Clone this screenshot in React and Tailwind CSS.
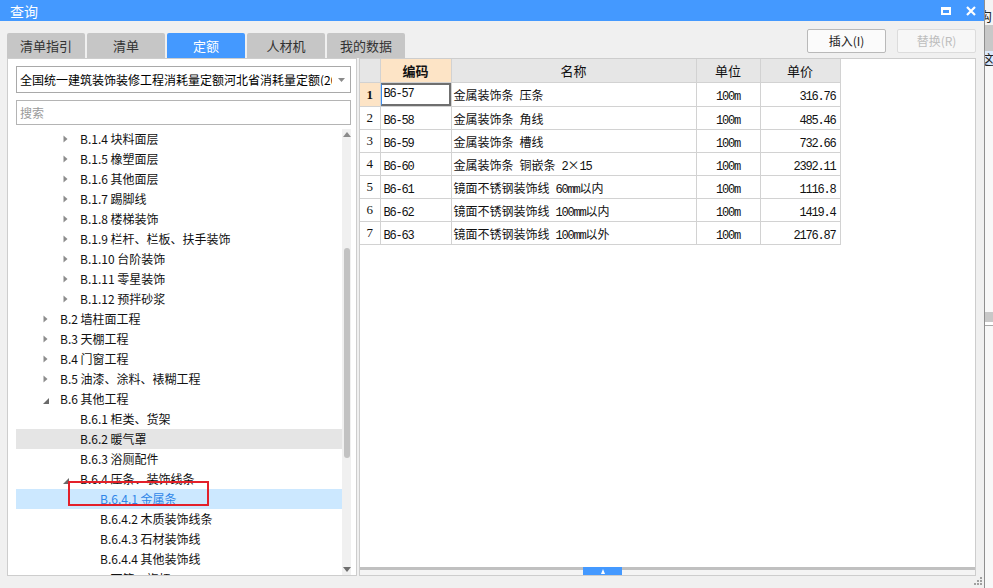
import React from "react";

const UI = "font-['Noto_Sans_CJK_SC',sans-serif]";

const tree = [
  { l: 2, t: "B.1.4 块料面层", a: "c" },
  { l: 2, t: "B.1.5 橡塑面层", a: "c" },
  { l: 2, t: "B.1.6 其他面层", a: "c" },
  { l: 2, t: "B.1.7 踢脚线", a: "c" },
  { l: 2, t: "B.1.8 楼梯装饰", a: "c" },
  { l: 2, t: "B.1.9 栏杆、栏板、扶手装饰", a: "c" },
  { l: 2, t: "B.1.10 台阶装饰", a: "c" },
  { l: 2, t: "B.1.11 零星装饰", a: "c" },
  { l: 2, t: "B.1.12 预拌砂浆", a: "c" },
  { l: 1, t: "B.2 墙柱面工程", a: "c" },
  { l: 1, t: "B.3 天棚工程", a: "c" },
  { l: 1, t: "B.4 门窗工程", a: "c" },
  { l: 1, t: "B.5 油漆、涂料、裱糊工程", a: "c" },
  { l: 1, t: "B.6 其他工程", a: "e" },
  { l: 2, t: "B.6.1 柜类、货架" },
  { l: 2, t: "B.6.2 暖气罩", hover: true },
  { l: 2, t: "B.6.3 浴厕配件" },
  { l: 2, t: "B.6.4 压条、装饰线条", a: "e" },
  { l: 3, t: "B.6.4.1 金属条", sel: true },
  { l: 3, t: "B.6.4.2 木质装饰线条" },
  { l: 3, t: "B.6.4.3 石材装饰线" },
  { l: 3, t: "B.6.4.4 其他装饰线" },
  { l: 2, t: "B.6.5 雨篷、旗杆", a: "c" },
];

const pad = { 1: "pl-[27px]", 2: "pl-[47px]", 3: "pl-[67px]" };

const rows = [
  ["B6-57", "金属装饰条 压条", "316.76"],
  ["B6-58", "金属装饰条 角线", "485.46"],
  ["B6-59", "金属装饰条 槽线", "732.66"],
  ["B6-60", "金属装饰条 铜嵌条 2×15", "2392.11"],
  ["B6-61", "镜面不锈钢装饰线 60mm以内", "1116.8"],
  ["B6-62", "镜面不锈钢装饰线 100mm以内", "1419.4"],
  ["B6-63", "镜面不锈钢装饰线 100mm以外", "2176.87"],
];

function Mixed({ text }) {
  const parts = text.match(/[\x20-\x7e]+|[^\x20-\x7e]+/g) || [];
  return (
    <>
      {parts.map((p, i) =>
        /^[\x20-\x7e]+$/.test(p) ? (
          <span key={i} className="font-['Liberation_Mono',monospace] text-[12px] tracking-[-1.2px]">
            {p}
          </span>
        ) : (
          <span key={i} className={`${UI} text-[12px]`}>
            {p}
          </span>
        )
      )}
    </>
  );
}

function Arrow({ a }) {
  if (a === "c")
    return (
      <svg width="5" height="8" viewBox="0 0 5 8">
        <path d="M0.5 0.5L4.5 4L0.5 7.5Z" fill="#8c8c8c" />
      </svg>
    );
  if (a === "e")
    return (
      <svg width="6" height="6" viewBox="0 0 6 6" className="mt-[3px]">
        <path d="M6 0L6 6L0 6Z" fill="#6a6a6a" />
      </svg>
    );
  return null;
}

export default function App() {
  const tabs = ["清单指引", "清单", "定额", "人材机", "我的数据"];
  return (
    <div className={`w-[993px] h-[588px] flex overflow-hidden bg-white ${UI}`}>
      {/* dialog */}
      <div className="w-[985px] h-full flex flex-col bg-[#f0f0f0] border-r border-[#8f8f8f]">
        {/* title */}
        <div className="h-[21px] bg-[#4499ff] flex items-center justify-between pl-[10px] pr-[8px] shrink-0">
          <span className="text-white text-[14px] leading-none">查询</span>
          <div className="flex items-center gap-[15px]">
            <div className="w-[10px] h-[8px] border-2 border-t-[3px] border-white" />
            <svg width="10" height="10" viewBox="0 0 10 10">
              <path d="M1 1L9 9M9 1L1 9" stroke="white" strokeWidth="2.2" />
            </svg>
          </div>
        </div>

        {/* body */}
        <div className="flex pl-[7px] pr-[8px] h-[555px]">
          {/* left column */}
          <div className="w-[350px] shrink-0 flex flex-col relative z-10">
            <div className="mt-[12px] h-[25px] flex gap-[2px] w-[400px]">
              {tabs.map((t) => (
                <div
                  key={t}
                  className={`w-[78px] shrink-0 h-full rounded-t-[2px] flex items-center justify-center text-[13px] leading-none ${
                    t === "定额" ? "bg-[#4499ff] text-white" : "bg-[#c6c6c6] text-[#333]"
                  }`}
                >
                  {t}
                </div>
              ))}
            </div>
            <div className="h-[518px] bg-white border border-[#cdcdcd] flex flex-col">
              <div className="mt-[7px] ml-[8px] w-[335px] h-[27px] border border-[#a9a9a9] flex items-center bg-white">
                <div className="flex-1 overflow-hidden whitespace-nowrap pl-[3px] text-[12px] text-black leading-none">
                  全国统一建筑装饰装修工程消耗量定额河北省消耗量定额(2017)
                </div>
                <div className="w-[18px] flex justify-center">
                  <svg width="7" height="4" viewBox="0 0 7 4">
                    <path d="M0 0H7L3.5 4Z" fill="#8a8a8a" />
                  </svg>
                </div>
              </div>
              <div className="mt-[7px] ml-[8px] w-[335px] h-[25px] border border-[#b4b4b4] flex items-center pl-[3px] text-[12px] text-[#9a9a9a] leading-none">
                搜索
              </div>
              <div className="mt-[4px] ml-[8px] w-[335px] flex-1 flex overflow-hidden relative">
                <div className="flex-1 overflow-hidden">
                  {tree.map((r, i) => (
                    <div
                      key={i}
                      className={`h-[20px] flex items-center whitespace-nowrap ${pad[r.l]} ${
                        r.hover ? "bg-[#e5e5e5]" : r.sel ? "bg-[#cce8ff]" : ""
                      }`}
                    >
                      <div className="w-[17px] flex items-center">
                        <Arrow a={r.a} />
                      </div>
                      <span className={`text-[12px] leading-none ${r.sel ? "text-[#2f86e8]" : "text-[#111]"}`}>
                        {r.t}
                      </span>
                    </div>
                  ))}
                </div>
                <div className="w-[9px] bg-[#f0f0f0] flex flex-col items-center">
                  <svg width="8" height="5" viewBox="0 0 8 5" className="mt-[3px]">
                    <path d="M0 5L4 0L8 5Z" fill="#8a8a8a" />
                  </svg>
                  <div className="mt-[111px] w-[6px] h-[210px] rounded-[3px] bg-[#c2c2c2]" />
                  <div className="flex-1" />
                  <svg width="8" height="5" viewBox="0 0 8 5" className="mb-[3px]">
                    <path d="M0 0L8 0L4 5Z" fill="#6e6e6e" />
                  </svg>
                </div>
                {/* red annotation box */}
                <div className="absolute left-[52px] top-[352px] w-[141px] h-[25px] border-2 border-[#e3202a]" />
              </div>
            </div>
          </div>

          {/* right column */}
          <div className="ml-[2px] w-[617px] flex flex-col">
            <div className="h-[37px] pt-[8px] flex justify-end gap-[11px]">
              <div className="w-[79px] h-[24px] border border-[#b9b9b9] rounded-[2px] bg-[#fbfbfb] flex items-center justify-center text-[12px] text-[#222] leading-none">
                插入(I)
              </div>
              <div className="w-[79px] h-[24px] border border-[#dcdcdc] rounded-[2px] bg-[#f7f7f7] flex items-center justify-center text-[12px] text-[#bdbdbd] leading-none">
                替换(R)
              </div>
            </div>
            <div className="h-[518px] bg-white border border-[#cdcdcd] flex flex-col">
              <div className="flex-1">
                <table className="border-collapse table-fixed">
                  <colgroup>
                    <col className="w-[20px]" />
                    <col className="w-[71px]" />
                    <col className="w-[245px]" />
                    <col className="w-[64px]" />
                    <col className="w-[80px]" />
                  </colgroup>
                  <thead>
                    <tr className="h-[23px] text-[13px] leading-none">
                      <th className="bg-[#e6e6e6] border border-[#d2d2d2] border-t-0 border-l-0" />
                      <th className="bg-[#fde4c6] border border-[#d2d2d2] border-t-0 font-bold text-[#111]">编码</th>
                      <th className="bg-[#e6e6e6] border border-[#d2d2d2] border-t-0 font-normal text-[#111]">名称</th>
                      <th className="bg-[#e6e6e6] border border-[#d2d2d2] border-t-0 font-normal text-[#111]">单位</th>
                      <th className="bg-[#e6e6e6] border border-[#d2d2d2] border-t-0 font-normal text-[#111]">单价</th>
                    </tr>
                  </thead>
                  <tbody>
                    {rows.map((r, i) => (
                      <tr key={i} className="h-[23px] text-[#111]">
                        <td
                          className={`border border-[#d2d2d2] border-l-0 text-center font-['Liberation_Serif',serif] text-[13px] leading-none ${
                            i === 0 ? "bg-[#fde4c6] font-bold" : "bg-white"
                          }`}
                        >
                          {i + 1}
                        </td>
                        <td className="border border-[#d2d2d2] p-0 leading-none">
                          {i === 0 ? (
                            <div className="h-[23px] flex items-center pl-[2px] border-2 border-l border-[#6f6f6f] border-l-[#3b8cf0]">
                              <Mixed text={r[0]} />
                            </div>
                          ) : (
                            <div className="pl-[3px]">
                              <Mixed text={r[0]} />
                            </div>
                          )}
                        </td>
                        <td className="border border-[#d2d2d2] pl-[2px] leading-none whitespace-nowrap">
                          <Mixed text={r[1]} />
                        </td>
                        <td className="border border-[#d2d2d2] text-center leading-none">
                          <Mixed text="100m" />
                        </td>
                        <td className="border border-[#d2d2d2] text-right pr-[4px] leading-none">
                          <Mixed text={r[2]} />
                        </td>
                      </tr>
                    ))}
                  </tbody>
                </table>
              </div>
              <div className="h-[8px] flex flex-col">
                <div className="h-[3px] bg-[#c0c0c0]" />
                <div className="flex-1 bg-[#f4f4f4]" />
              </div>
              <div className="h-0 relative">
                <div className="absolute left-[223px] bottom-0 w-[39px] h-[8px] bg-[#4499ff] flex items-center justify-center">
                  <svg width="4" height="5" viewBox="0 0 4 5">
                    <path d="M0 5L2 0L4 5Z" fill="white" />
                  </svg>
                </div>
              </div>
            </div>
          </div>
        </div>

        {/* bottom */}
        <div className="flex-1 flex justify-end items-end pr-[2px] pb-[3px]">
          <svg width="8" height="8" viewBox="0 0 8 8">
            <rect x="6" y="0" width="2" height="2" fill="#a0a0a0" />
            <rect x="3" y="3" width="2" height="2" fill="#a0a0a0" />
            <rect x="6" y="3" width="2" height="2" fill="#a0a0a0" />
            <rect x="0" y="6" width="2" height="2" fill="#a0a0a0" />
            <rect x="3" y="6" width="2" height="2" fill="#a0a0a0" />
            <rect x="6" y="6" width="2" height="2" fill="#a0a0a0" />
          </svg>
        </div>
      </div>

      {/* background window strip */}
      <div className="w-[8px] h-full flex flex-col overflow-hidden bg-white text-[13px] leading-none text-[#222]">
        <div className="h-[25px] flex items-end pb-[3px] bg-[#f4f4f4] -ml-[6px]">沟</div>
        <div className="h-[26px] bg-[#c8c8c8]" />
        <div className="h-[15px] bg-[#dbeafd] flex items-center -ml-[4px]">这</div>
        <div className="h-[246px] bg-[#f8f8f8]" />
        <div className="h-[10px] bg-[#c8c8c8]" />
        <div className="h-[3px] bg-white" />
        <div className="h-[1px] bg-[#a8a8a8]" />
        <div className="flex-1 bg-[#f8f8f8]" />
      </div>
    </div>
  );
}
